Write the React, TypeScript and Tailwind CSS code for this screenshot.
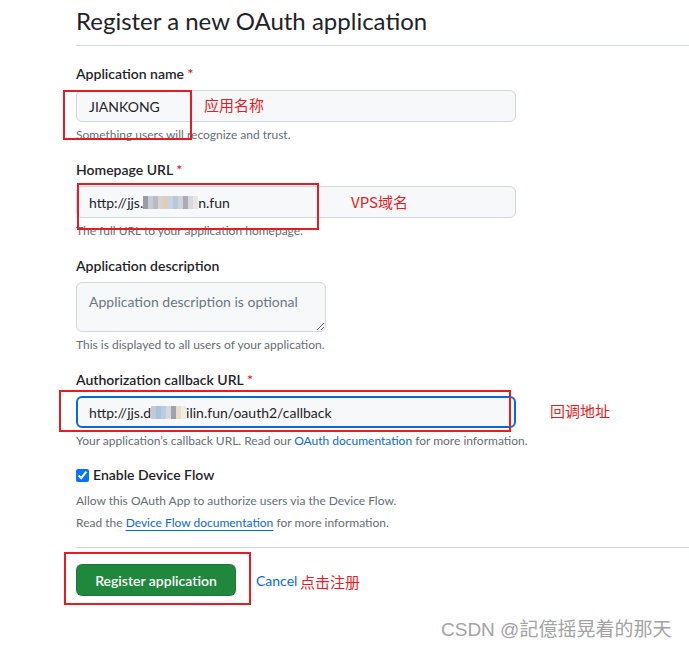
import React from "react";

const mosaicHome = [
  "#9a9ca6",
  "#c9cbd2",
  "#b8bac4",
  "#d6d3cf",
  "#e0cdb3",
  "#c2d4e6",
  "#b9c9da",
  "#cfd4dc",
  "#a9abb5",
  "#d8d8dc",
  "#e6e6e8",
];

const mosaicCallback = ["#c5c8d0", "#a9c2de", "#b8cde4", "#d8d8d8", "#9fa2aa", "#e8dccb", "#f0ebe4"];

function Mosaic({ colors }: { colors: string[] }) {
  return (
    <span className="inline-flex h-[13px] items-stretch align-middle">
      {colors.map((c, i) => (
        <span key={i} className="w-[5px]" style={{ backgroundColor: c }} />
      ))}
    </span>
  );
}

function Label({ children, required }: { children: React.ReactNode; required?: boolean }) {
  return (
    <label className="block text-[14px] leading-[20px] font-semibold">
      {children}
      {required && <span className="text-[#cf222e]"> *</span>}
    </label>
  );
}

function Hint({ children }: { children: React.ReactNode }) {
  return <p className="mt-[4px] text-[12px] leading-[18px] text-[#656d76]">{children}</p>;
}

function RedBox({ className }: { className: string }) {
  return <div className={"absolute border-2 border-[#e81b23] " + className} />;
}

function Note({ children, className }: { children: React.ReactNode; className: string }) {
  return (
    <div
      className={
        "absolute text-[15px] leading-[20px] text-[#e81b23] font-[family-name:'Noto_Sans_CJK_SC',sans-serif] " +
        className
      }
    >
      {children}
    </div>
  );
}

export default function App() {
  return (
    <div className="relative w-[689px] h-[648px] overflow-hidden bg-white text-[#1f2328] font-[family-name:Lato,'Noto_Sans',sans-serif]">
      <div className="pl-[76px]">
        <h1 className="mt-[6px] pb-[9px] border-b border-[#d0d7de] text-[24px] leading-[30px] font-normal">
          Register a new OAuth application
        </h1>

        <div className="mt-[18px]">
          <Label required>Application name</Label>
          <div className="mt-[6px] flex h-[32px] w-[440px] items-center rounded-[6px] border border-[#d0d7de] bg-[#f6f8fa] px-[12px] text-[14px]">
            JIANKONG
          </div>
          <Hint>Something users will recognize and trust.</Hint>
        </div>

        <div className="mt-[16px]">
          <Label required>Homepage URL</Label>
          <div className="mt-[6px] flex h-[32px] w-[440px] items-center rounded-[6px] border border-[#d0d7de] bg-[#f6f8fa] px-[12px] text-[14px]">
            <span>http://jjs.</span>
            <Mosaic colors={mosaicHome} />
            <span>n.fun</span>
          </div>
          <Hint>The full URL to your application homepage.</Hint>
        </div>

        <div className="mt-[16px]">
          <Label>Application description</Label>
          <textarea
            readOnly
            placeholder="Application description is optional"
            className="mt-[6px] block h-[50px] w-[250px] rounded-[6px] border border-[#d0d7de] bg-[#f6f8fa] px-[12px] py-[9px] text-[14px] leading-[20px] placeholder:text-[#6e7781] outline-none"
          />
          <Hint>This is displayed to all users of your application.</Hint>
        </div>

        <div className="mt-[16px]">
          <Label required>Authorization callback URL</Label>
          <div className="mt-[6px] flex h-[32px] w-[440px] items-center rounded-[6px] border-2 border-[#0969da] bg-[#f6f8fa] px-[11px] text-[14px]">
            <span>http://jjs.d</span>
            <Mosaic colors={mosaicCallback} />
            <span>ilin.fun/oauth2/callback</span>
          </div>
          <Hint>
            Your application’s callback URL. Read our{" "}
            <a className="text-[#0969da]">OAuth documentation</a> for more information.
          </Hint>
        </div>

        <div className="mt-[15px] flex h-[20px] items-center gap-[4px]">
          <input type="checkbox" checked readOnly className="h-[13px] w-[13px] accent-[#0075ff]" />
          <span className="text-[14px] leading-[20px] font-semibold">Enable Device Flow</span>
        </div>
        <p className="mt-[7px] text-[12px] leading-[18px] text-[#656d76]">
          Allow this OAuth App to authorize users via the Device Flow.
        </p>
        <p className="mt-[4px] text-[12px] leading-[18px] text-[#656d76]">
          Read the{" "}
          <a className="text-[#0969da] underline decoration-[#0969da] underline-offset-[3px]">
            Device Flow documentation
          </a>{" "}
          for more information.
        </p>

        <div className="mt-[15px] border-t border-[#d0d7de]" />

        <div className="mt-[16px] flex items-center">
          <button className="h-[32px] w-[160px] rounded-[6px] border border-[rgba(31,35,40,0.15)] bg-[#1f883d] text-[14px] font-semibold text-white">
            Register application
          </button>
          <a className="ml-[20px] text-[14px] text-[#0969da]">Cancel</a>
        </div>
      </div>

      <RedBox className="left-[63px] top-[90px] w-[129px] h-[50px]" />
      <RedBox className="left-[77px] top-[183px] w-[242px] h-[47px]" />
      <RedBox className="left-[59px] top-[390px] w-[452px] h-[42px]" />
      <RedBox className="left-[64px] top-[552px] w-[187px] h-[53px]" />

      <Note className="left-[204px] top-[95px]">应用名称</Note>
      <Note className="left-[351px] top-[192px]">VPS域名</Note>
      <Note className="left-[550px] top-[401px]">回调地址</Note>
      <Note className="left-[300px] top-[572px]">点击注册</Note>

      <div className="absolute left-[441px] top-[618px] text-[19px] leading-[24px] text-[#a3a3a3] [text-shadow:0_0_1px_#ffffff] font-[family-name:'Liberation_Sans','Noto_Sans_CJK_SC',sans-serif]">
        CSDN @記億摇晃着的那天
      </div>
    </div>
  );
}
